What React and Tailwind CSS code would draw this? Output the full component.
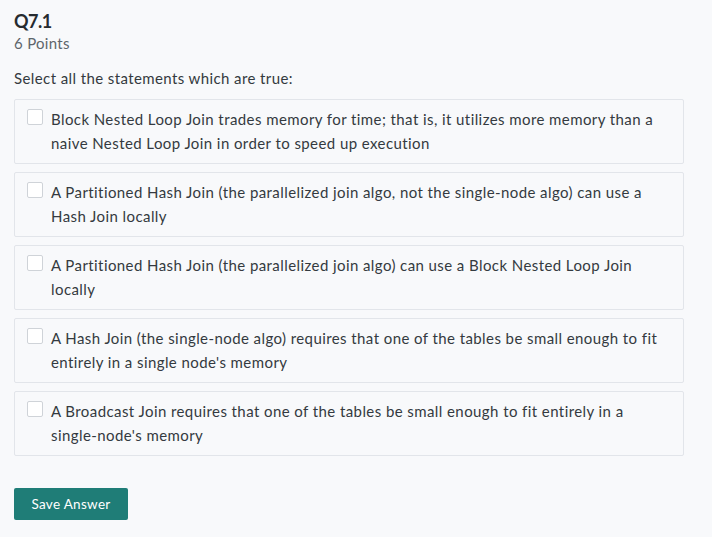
import React from "react";

const items = [
  ["Block Nested Loop Join trades memory for time; that is, it utilizes more memory than a", "naive Nested Loop Join in order to speed up execution"],
  ["A Partitioned Hash Join (the parallelized join algo, not the single-node algo) can use a", "Hash Join locally"],
  ["A Partitioned Hash Join (the parallelized join algo) can use a Block Nested Loop Join", "locally"],
  ["A Hash Join (the single-node algo) requires that one of the tables be small enough to fit", "entirely in a single node's memory"],
  ["A Broadcast Join requires that one of the tables be small enough to fit entirely in a", "single-node's memory"],
];

export default function App() {
  return (
    <div
      className="min-h-[537px] w-[712px] bg-[#f8f9fb] text-[#333a40] px-[14px] pt-[9px]"
      style={{ fontFamily: "Lato, 'Open Sans', sans-serif" }}
    >
      <div className="text-[18px] font-bold leading-[24px] text-[#262b30] tracking-[-0.5px]">Q7.1</div>
      <div className="text-[15px] leading-[20px] text-[#5e656b] tracking-[0.3px]">6 Points</div>
      <div className="mt-[15px] text-[15px] leading-[20px] text-[#343a40] tracking-[0.4px]">Select all the statements which are true:</div>
      <div className="mt-[11px] flex w-[670px] flex-col gap-[8px]">
        {items.map((t, i) => (
          <div
            key={i}
            className="flex h-[65px] items-start rounded-[2px] border border-[#e2e5ea] bg-[#f8f9fb] pl-[12px] pr-[10px] pt-[7px]"
          >
            <div className="mt-[2px] h-[16px] w-[16px] shrink-0 rounded-[2px] border border-[#cfd3d8] bg-white" />
            <div className="ml-[8px] whitespace-nowrap text-[15px] leading-[24px] text-[#343a40] tracking-[0.42px]">
              {t[0]}
              <br />
              {t[1]}
            </div>
          </div>
        ))}
      </div>
      <button className="mt-[32px] h-[32px] w-[114px] rounded-[2px] bg-[#1f7d77] text-[13.5px] text-white tracking-[0.3px]">
        Save Answer
      </button>
    </div>
  );
}
